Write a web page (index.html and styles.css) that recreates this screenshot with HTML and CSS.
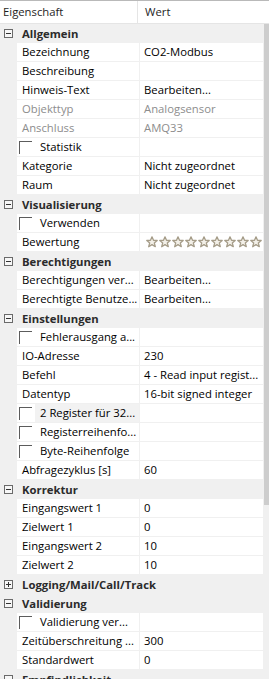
FILE: index.html
```html
<!DOCTYPE html>
<html lang="de">
<head>
    <meta charset="UTF-8">
    <meta name="viewport" content="width=device-width, initial-scale=1.0">
    <title>Eigenschaften</title>
    <link rel="stylesheet" href="styles.css">
</head>
<body>
    <div class="grid-header">
        <div class="head-name">Eigenschaft</div>
        <div class="head-value">Wert</div>
    </div>
    <div class="grid-body">
        <div class="rows">
            <div class="cat"><span class="toggle"></span>Allgemein</div>
            <div class="row"><div class="name">Bezeichnung</div><div class="value">CO2-Modbus</div></div>
            <div class="row"><div class="name">Beschreibung</div><div class="value"></div></div>
            <div class="row"><div class="name">Hinweis-Text</div><div class="value">Bearbeiten...</div></div>
            <div class="row disabled"><div class="name">Objekttyp</div><div class="value">Analogsensor</div></div>
            <div class="row disabled"><div class="name">Anschluss</div><div class="value">AMQ33</div></div>
            <div class="row"><div class="name"><span class="check"></span><span class="label">Statistik</span></div><div class="value"></div></div>
            <div class="row"><div class="name">Kategorie</div><div class="value">Nicht zugeordnet</div></div>
            <div class="row"><div class="name">Raum</div><div class="value">Nicht zugeordnet</div></div>

            <div class="cat"><span class="toggle"></span>Visualisierung</div>
            <div class="row"><div class="name"><span class="check"></span><span class="label">Verwenden</span></div><div class="value"></div></div>
            <div class="row"><div class="name">Bewertung</div><div class="value stars">
                <svg viewBox="0 0 12 12"><polygon points="6,0.8 7.5,4.3 11.2,4.5 8.3,6.9 9.3,10.7 6,8.6 2.7,10.7 3.7,6.9 0.8,4.5 4.5,4.3"/></svg>
                <svg viewBox="0 0 12 12"><polygon points="6,0.8 7.5,4.3 11.2,4.5 8.3,6.9 9.3,10.7 6,8.6 2.7,10.7 3.7,6.9 0.8,4.5 4.5,4.3"/></svg>
                <svg viewBox="0 0 12 12"><polygon points="6,0.8 7.5,4.3 11.2,4.5 8.3,6.9 9.3,10.7 6,8.6 2.7,10.7 3.7,6.9 0.8,4.5 4.5,4.3"/></svg>
                <svg viewBox="0 0 12 12"><polygon points="6,0.8 7.5,4.3 11.2,4.5 8.3,6.9 9.3,10.7 6,8.6 2.7,10.7 3.7,6.9 0.8,4.5 4.5,4.3"/></svg>
                <svg viewBox="0 0 12 12"><polygon points="6,0.8 7.5,4.3 11.2,4.5 8.3,6.9 9.3,10.7 6,8.6 2.7,10.7 3.7,6.9 0.8,4.5 4.5,4.3"/></svg>
                <svg viewBox="0 0 12 12"><polygon points="6,0.8 7.5,4.3 11.2,4.5 8.3,6.9 9.3,10.7 6,8.6 2.7,10.7 3.7,6.9 0.8,4.5 4.5,4.3"/></svg>
                <svg viewBox="0 0 12 12"><polygon points="6,0.8 7.5,4.3 11.2,4.5 8.3,6.9 9.3,10.7 6,8.6 2.7,10.7 3.7,6.9 0.8,4.5 4.5,4.3"/></svg>
                <svg viewBox="0 0 12 12"><polygon points="6,0.8 7.5,4.3 11.2,4.5 8.3,6.9 9.3,10.7 6,8.6 2.7,10.7 3.7,6.9 0.8,4.5 4.5,4.3"/></svg>
                <svg viewBox="0 0 12 12"><polygon points="6,0.8 7.5,4.3 11.2,4.5 8.3,6.9 9.3,10.7 6,8.6 2.7,10.7 3.7,6.9 0.8,4.5 4.5,4.3"/></svg>
            </div></div>

            <div class="cat"><span class="toggle"></span>Berechtigungen</div>
            <div class="row"><div class="name">Berechtigungen ver...</div><div class="value">Bearbeiten...</div></div>
            <div class="row"><div class="name">Berechtigte Benutze...</div><div class="value">Bearbeiten...</div></div>

            <div class="cat"><span class="toggle"></span>Einstellungen</div>
            <div class="row"><div class="name"><span class="check"></span><span class="label">Fehlerausgang a...</span></div><div class="value"></div></div>
            <div class="row"><div class="name">IO-Adresse</div><div class="value">230</div></div>
            <div class="row"><div class="name">Befehl</div><div class="value">4 - Read input regist...</div></div>
            <div class="row"><div class="name">Datentyp</div><div class="value">16-bit signed integer</div></div>
            <div class="row"><div class="name"><span class="check"></span><span class="label shaded">2 Register für 32...</span></div><div class="value"></div></div>
            <div class="row"><div class="name"><span class="check"></span><span class="label">Registerreihenfo...</span></div><div class="value"></div></div>
            <div class="row"><div class="name"><span class="check"></span><span class="label">Byte-Reihenfolge</span></div><div class="value"></div></div>
            <div class="row"><div class="name">Abfragezyklus [s]</div><div class="value">60</div></div>

            <div class="cat"><span class="toggle"></span>Korrektur</div>
            <div class="row"><div class="name">Eingangswert 1</div><div class="value">0</div></div>
            <div class="row"><div class="name">Zielwert 1</div><div class="value">0</div></div>
            <div class="row"><div class="name">Eingangswert 2</div><div class="value">10</div></div>
            <div class="row"><div class="name">Zielwert 2</div><div class="value">10</div></div>

            <div class="cat"><span class="toggle plus"></span>Logging/Mail/Call/Track</div>

            <div class="cat"><span class="toggle"></span>Validierung</div>
            <div class="row"><div class="name"><span class="check"></span><span class="label">Validierung ver...</span></div><div class="value"></div></div>
            <div class="row"><div class="name">Zeitüberschreitung ...</div><div class="value">300</div></div>
            <div class="row"><div class="name">Standardwert</div><div class="value">0</div></div>

            <div class="cat"><span class="toggle"></span>Empfindlichkeit</div>
        </div>
        <div class="scrollbar">
            <div class="thumb"></div>
        </div>
    </div>
</body>
</html>
```

FILE: styles.css
```css
body {
    margin: 0;
    padding: 0;
    background: #f0f0f0;
    font-family: 'Open Sans', sans-serif;
    font-size: 11.3px;
    color: #000;
    overflow: hidden;
    height: 679px;
}

/* Header */
.grid-header {
    display: flex;
    height: 23px;
    background: #fff;
    border-top: 1px solid #b9b9b9;
    border-bottom: 1px solid #e5e5e5;
    box-sizing: border-box;
    height: 24px;
    line-height: 22px;
    color: #1e1e1e;
}

.head-name {
    width: 138px;
    padding-left: 3px;
    box-sizing: border-box;
    border-right: 1px solid #e5e5e5;
}

.head-value {
    padding-left: 7px;
}

/* Body */
.grid-body {
    display: flex;
}

.rows {
    width: 263px;
}

.row {
    display: flex;
    height: 18px;
    margin-bottom: 1px;
    margin-left: 17px;
    line-height: 18px;
    white-space: nowrap;
}

.name {
    width: 122px;
    margin-right: 1px;
    background: #fff;
    padding-left: 5px;
    box-sizing: border-box;
    overflow: hidden;
    display: flex;
    align-items: center;
}

.value {
    flex: 1;
    background: #fff;
    padding-left: 4px;
    overflow: hidden;
}

.disabled {
    color: #8d8d8d;
}

/* Category rows */
.cat {
    height: 19px;
    line-height: 19px;
    display: flex;
    align-items: center;
    font-weight: 700;
    color: #2b2b2b;
    white-space: nowrap;
}

.toggle {
    width: 9px;
    height: 9px;
    border: 1px solid #6a6a6a;
    box-sizing: border-box;
    margin: 0 9px 0 4px;
    position: relative;
    background: #f7f7f7;
}

.toggle::before {
    content: "";
    position: absolute;
    left: 1px;
    top: 3px;
    width: 5px;
    height: 1px;
    background: #333;
}

.toggle.plus::after {
    content: "";
    position: absolute;
    left: 3px;
    top: 1px;
    width: 1px;
    height: 5px;
    background: #333;
}

/* Checkbox */
.name .check {
    width: 13px;
    height: 13px;
    border-top: 1px solid #5c5c5c;
    border-left: 1px solid #5c5c5c;
    box-sizing: border-box;
    margin-left: -3px;
    flex: none;
}

.name .label {
    flex: 1;
    margin-left: 3px;
    padding-left: 5px;
    height: 18px;
}

.name .label.shaded {
    background: #f2f2f2;
}

/* Rating stars */
.stars {
    display: flex;
    align-items: center;
    gap: 1px;
    padding-left: 6px;
    overflow: visible;
}

.stars svg {
    width: 12px;
    height: 12px;
    flex: none;
}

.stars polygon {
    fill: #f3f0e8;
    stroke: #a59c88;
    stroke-width: 1.3;
    stroke-linejoin: round;
}

/* Scrollbar */
.scrollbar {
    width: 6px;
    background: #f0f0f0;
}

.thumb {
    width: 5px;
    margin-left: 1px;
    height: 481px;
    background: #cdcdcd;
}
```
